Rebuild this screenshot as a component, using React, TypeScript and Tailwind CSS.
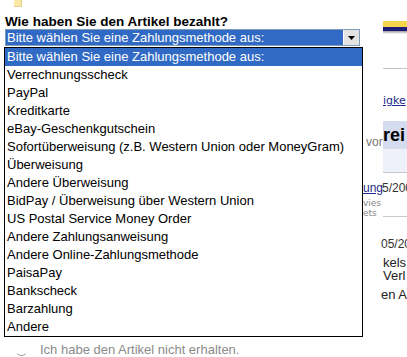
const PAYMENT_OPTIONS = [
  'Bitte wählen Sie eine Zahlungsmethode aus:',
  'Verrechnungsscheck',
  'PayPal',
  'Kreditkarte',
  'eBay-Geschenkgutschein',
  'Sofortüberweisung (z.B. Western Union oder MoneyGram)',
  'Überweisung',
  'Andere Überweisung',
  'BidPay / Überweisung über Western Union',
  'US Postal Service Money Order',
  'Andere Zahlungsanweisung',
  'Andere Online-Zahlungsmethode',
  'PaisaPay',
  'Bankscheck',
  'Barzahlung',
  'Andere',
];

const App = () => {
  return (
    <div className="relative w-[407px] h-[357px] overflow-hidden bg-white font-['Liberation_Sans',Arial,sans-serif] text-black">
      <div className="flex">
        {/* left column: question + select */}
        <div className="w-[363px] shrink-0">
          <div className="ml-[14px] w-[8px] h-[7px] bg-[#fbe8a4] border-r border-b border-[#e9d48e]" />
          <h2 className="mt-[7px] ml-[5px] text-[13.5px] leading-[15px] font-bold">
            Wie haben Sie den Artikel bezahlt?
          </h2>
          <div className="ml-[5px] w-[355px] h-[17px] border border-[#7f9db9] flex">
            <div className="flex-1 bg-[#316ac5] text-white text-[13px] leading-[15px] pl-[1px] whitespace-nowrap overflow-hidden">
              Bitte wählen Sie eine Zahlungsmethode aus:
            </div>
            <div className="w-[16px] bg-[#e3e3e3] border-l border-white flex items-center justify-center">
              <svg width="7" height="4" viewBox="0 0 7 4">
                <path d="M0 0h7L3.5 4z" fill="#000" />
              </svg>
            </div>
          </div>
          <div className="mt-[296px] ml-[15px] flex items-center">
            <div className="w-[13px] h-[13px] rounded-full border border-transparent border-b-[#9a9a9a]" />
            <span className="ml-[12px] text-[13px] leading-[15px] text-[#8a8a8a] whitespace-nowrap">
              Ich habe den Artikel nicht erhalten.
            </span>
          </div>
        </div>

        {/* right column: page content partly hidden by the list */}
        <div className="flex-1 flex flex-col">
          <div className="ml-[20px] mt-[21px]">
            <div className="h-[6px] bg-[#f6d54c]" />
            <div className="h-[4px] bg-[#1c1c7a]" />
            <div className="h-[3px] bg-gradient-to-b from-[#9a9a9a] to-white" />
          </div>
          <div className="ml-[20px] mt-[34px] h-px bg-[#c4c4c4]" />
          <a className="ml-[20px] mt-[25px] text-[11px] leading-[14px] font-['DejaVu_Sans',sans-serif] text-[#1d2a8c] underline whitespace-nowrap">
            igke
          </a>
          <div className="mt-[13px] flex h-[28px]">
            <span className="w-[20px] self-end pl-[3px] text-[12px] leading-[14px] text-[#777]">vor</span>
            <div className="flex-1 bg-[#d6dcef] text-[18px] font-bold leading-[28px] whitespace-nowrap overflow-hidden">
              rei
            </div>
          </div>
          <div className="ml-[20px] h-[24px] bg-[#eef1f9] border-b border-[#c8c8c8]" />
          <div className="mt-[9px] flex h-[12px] items-end">
            <span className="w-[20px] text-[12px] leading-[12px] text-[#1d2a8c] underline">ung</span>
            <span className="-ml-[1px] text-[12px] leading-[12px] text-[#333] whitespace-nowrap overflow-hidden">5/200</span>
          </div>
          <div className="mt-[4px] text-[9px] leading-[10px] font-['DejaVu_Sans',sans-serif] text-[#888]">vies</div>
          <div className="text-[9px] leading-[10px] font-['DejaVu_Sans',sans-serif] text-[#888]">ets</div>
          <div className="ml-[20px] mt-[-2px] h-px bg-[#c8c8c8]" />
          <div className="ml-[18px] mt-[20px] text-[12px] leading-[14px] text-[#333] whitespace-nowrap overflow-hidden">05/20</div>
          <div className="ml-[20px] mt-[5px] text-[13px] leading-[13px] text-[#222]">kels</div>
          <div className="ml-[20px] text-[13px] leading-[14px] text-[#222]">Verl</div>
          <div className="ml-[18px] mt-[5px] text-[13px] leading-[14px] text-[#222] whitespace-nowrap overflow-hidden">en Ar</div>
        </div>
      </div>

      {/* open dropdown list */}
      <ul className="absolute left-[4px] top-[47px] w-[359px] border border-black bg-white">
        {PAYMENT_OPTIONS.map((option, i) => (
          <li
            key={option}
            className={`h-[18px] leading-[18px] pl-[2px] text-[13px] whitespace-nowrap ${i === 0 ? 'bg-[#316ac5] text-white' : 'text-black'}`}
          >
            {option}
          </li>
        ))}
      </ul>
    </div>
  );
};

export default App;
